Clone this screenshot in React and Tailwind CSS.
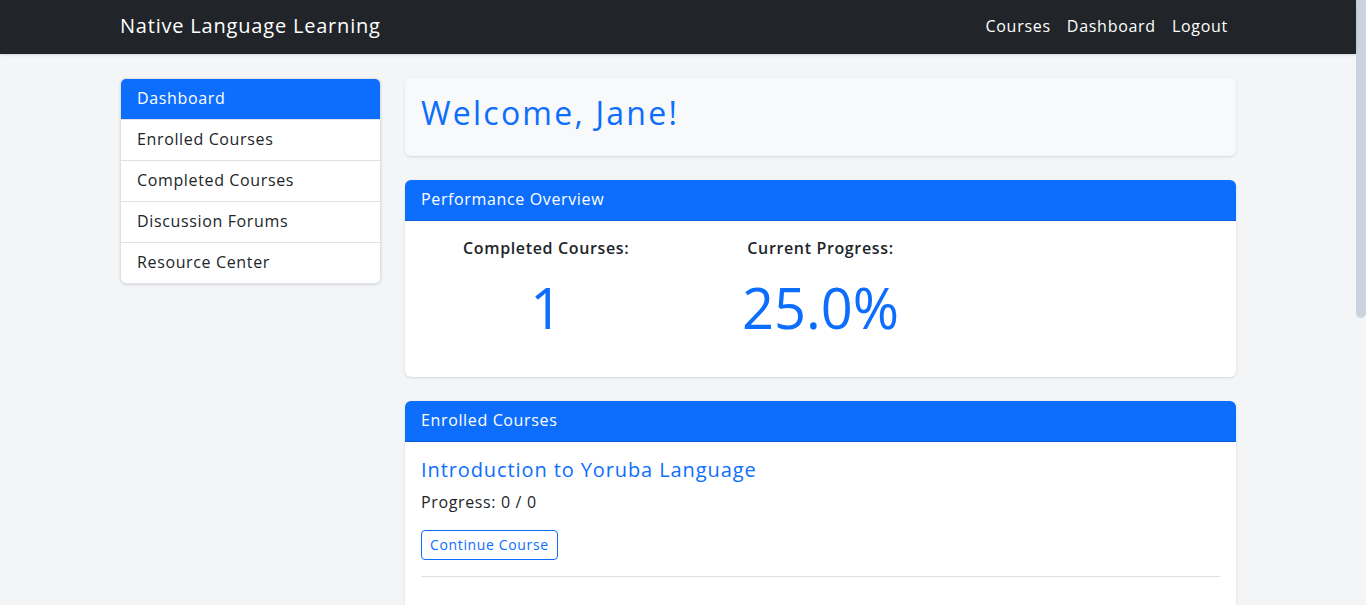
import React from 'react'

const links = ['Courses', 'Dashboard', 'Logout']
const sideItems = ['Dashboard', 'Enrolled Courses', 'Completed Courses', 'Discussion Forums', 'Resource Center']

const Navbar = () => (
  <nav className="relative h-[54px] bg-[#212529] shadow-sm">
    <div className="mx-auto flex h-full max-w-[1140px] items-center justify-between px-3 pb-[2px]">
      <span className="text-[20px] tracking-[0.04em] text-white">Native Language Learning</span>
      <div className="flex">
        {links.map((l) => (
          <span key={l} className="px-2 text-base tracking-[0.045em] text-white">{l}</span>
        ))}
      </div>
    </div>
  </nav>
)

const Sidebar = () => (
  <div className="w-[261px] shrink-0">
    <div className="overflow-hidden rounded-md border border-[#dee2e6] bg-white shadow-sm">
      {sideItems.map((item, i) => (
        <div
          key={item}
          className={
            i === 0
              ? 'bg-[#0d6efd] px-4 pt-[7px] pb-[9px] text-white'
              : 'border-t border-[#dee2e6] px-4 pt-[7px] pb-[9px] text-[#212529]'
          }
        >
          {item}
        </div>
      ))}
    </div>
  </div>
)

const CardHeader = ({ children }) => (
  <div className="rounded-t-md border-b border-[#0b5ed7] bg-[#0d6efd] px-4 pt-[7px] pb-[9px] text-white">{children}</div>
)

const Stat = ({ label, value }) => (
  <div className="px-3 text-center">
    <h6 className="mt-[2px] mb-2 text-base leading-[1.2] font-semibold">{label}</h6>
    <p className="mt-[15px] mb-[20px] text-[56px] leading-[1.2] tracking-normal text-[#0d6efd]">{value}</p>
  </div>
)

const App = () => {
  return (
    <div className="flex h-screen overflow-hidden bg-[#f4f5f7] font-['Open_Sans',sans-serif] tracking-[0.04em] text-[#212529]">
      <div className="min-w-0 flex-1">
        <Navbar />

        <div className="mx-auto mt-6 flex max-w-[1140px] gap-6 px-3">
          <Sidebar />

          <div className="flex-1">
            <div className="mb-6 rounded-md bg-[#f8f9fa] p-4 shadow-sm">
              <h2 className="mb-2 text-[32px] leading-[1.2] tracking-[0.07em] text-[#0d6efd]">Welcome, Jane!</h2>
            </div>

            <div className="mb-6 rounded-md bg-white shadow-sm">
              <CardHeader>Performance Overview</CardHeader>
              <div className="p-4">
                <div className="-mx-3 grid grid-cols-3">
                  <Stat label="Completed Courses:" value="1" />
                  <Stat label="Current Progress:" value="25.0%" />
                </div>
              </div>
            </div>

            <div className="rounded-md bg-white shadow-sm">
              <CardHeader>Enrolled Courses</CardHeader>
              <div className="p-4">
                <h5 className="mb-2 text-[20px] leading-[1.2] tracking-[0.045em] text-[#0d6efd]">Introduction to Yoruba Language</h5>
                <p className="mb-4 leading-6">Progress: 0 / 0</p>
                <button className="rounded border border-[#0d6efd] px-2 py-1 text-sm text-[#0d6efd]">Continue Course</button>
                <hr className="mt-4 border-[#dee2e6]" />
                <div className="h-[400px]" />
              </div>
            </div>
          </div>
        </div>
      </div>

      {/* scrollbar */}
      <div className="w-[10px] shrink-0">
        <div className="h-[318px] rounded-b-full bg-[#c9d4df]" />
      </div>
    </div>
  )
}

export default App
